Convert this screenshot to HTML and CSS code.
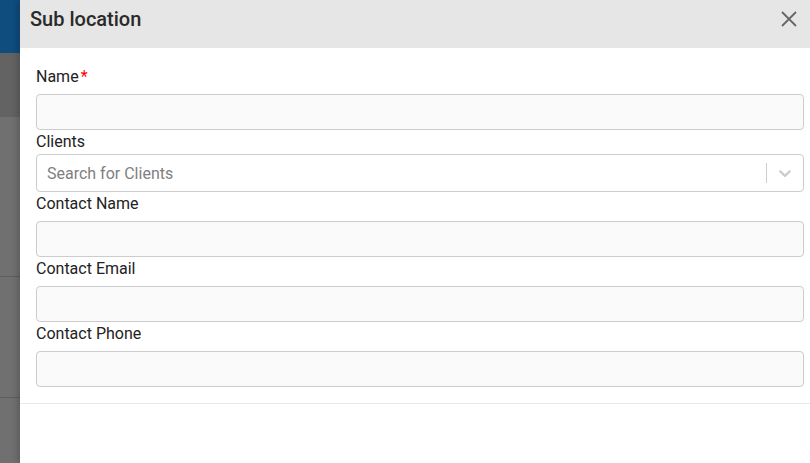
FILE: index.html
```html
<!DOCTYPE html>
<html lang="en">
<head>
    <meta charset="UTF-8">
    <meta name="viewport" content="width=device-width, initial-scale=1.0">
    <title>Sub location</title>
    <link rel="stylesheet" href="styles.css">
</head>
<body>
    <!-- pagina dietro al modale, oscurata -->
    <div class="backdrop">
        <div class="bd-topbar"></div>
        <div class="bd-toolbar"></div>
        <div class="bd-row bd-row-tall"></div>
        <div class="bd-row bd-row-mid"></div>
        <div class="bd-row bd-row-last"></div>
    </div>

    <div class="modal">
        <div class="modal-header">
            <h1 class="modal-title">Sub location</h1>
            <button class="modal-close" aria-label="Close">
                <svg width="16" height="16" viewBox="0 0 16 16">
                    <path d="M1 1 L15 15 M15 1 L1 15" stroke="#666" stroke-width="1.8" fill="none"/>
                </svg>
            </button>
        </div>

        <form class="modal-body">
            <div class="form-group">
                <label class="form-label">Name<span class="required">*</span></label>
                <input type="text" class="form-input">
            </div>

            <div class="form-group form-group-select">
                <label class="form-label">Clients</label>
                <div class="select-control">
                    <div class="select-value">Search for Clients</div>
                    <span class="select-separator"></span>
                    <div class="select-indicator">
                        <svg width="20" height="20" viewBox="0 0 20 20">
                            <path fill="#ccc" d="M4.516 7.548c0.436-0.446 1.043-0.481 1.576 0l3.908 3.747 3.908-3.747c0.533-0.481 1.141-0.446 1.574 0 0.436 0.445 0.408 1.197 0 1.615-0.406 0.418-4.695 4.502-4.695 4.502-0.217 0.223-0.502 0.335-0.787 0.335s-0.57-0.112-0.789-0.335c0 0-4.287-4.084-4.695-4.502s-0.436-1.17 0-1.615z"/>
                        </svg>
                    </div>
                </div>
            </div>

            <div class="form-group">
                <label class="form-label">Contact Name</label>
                <input type="text" class="form-input">
            </div>

            <div class="form-group">
                <label class="form-label">Contact Email</label>
                <input type="email" class="form-input">
            </div>

            <div class="form-group">
                <label class="form-label">Contact Phone</label>
                <input type="tel" class="form-input">
            </div>
        </form>

        <div class="modal-footer"></div>
    </div>
</body>
</html>
```

FILE: styles.css
```css
/* Stili base */
body {
    margin: 0;
    font-family: 'Roboto', 'Liberation Sans', sans-serif;
    color: #222;
    background-color: #fff;
    display: flex;
    height: 100vh;
    overflow: hidden;
}

/* --- Pagina dietro (oscurata) --- */
.backdrop {
    width: 20px;
    flex-shrink: 0;
    display: flex;
    flex-direction: column;
    background-color: #707070;
}

.bd-topbar {
    height: 53px;
    background-color: #0f4d7e;
}

.bd-toolbar {
    height: 64px;
    background-color: #636363;
}

.bd-row {
    border-bottom: 1px solid #5e5e5e;
}

.bd-row-tall {
    height: 159px;
}

.bd-row-mid {
    height: 120px;
}

.bd-row-last {
    flex: 1;
    border-bottom: none;
}

/* --- Modale --- */
.modal {
    flex: 1;
    display: flex;
    flex-direction: column;
    background-color: #fff;
    box-shadow: -3px 0 6px rgba(0, 0, 0, 0.18);
    position: relative;
}

.modal-header {
    height: 48px;
    box-sizing: border-box;
    padding: 4px 10px 0 10px;
    background-color: #e6e6e6;
    display: flex;
    justify-content: space-between;
    align-items: flex-start;
}

.modal-title {
    margin: 0;
    font-size: 20px;
    font-weight: 500;
    line-height: 30px;
    color: #2a2a2a;
}

.modal-close {
    border: none;
    background: none;
    padding: 0;
    margin: 7px 3px 0 0;
    width: 16px;
    height: 16px;
    cursor: pointer;
    display: flex;
}

.modal-body {
    padding: 17px 6px 16px 16px;
}

.form-label {
    display: block;
    font-size: 16px;
    line-height: 24px;
    margin-bottom: 5px;
}

.required {
    color: #f00;
    margin-left: 2px;
}

.form-input {
    display: block;
    width: 100%;
    box-sizing: border-box;
    height: 36px;
    border: 1px solid #ccc;
    border-radius: 4px;
    background-color: #fafafa;
    font-family: inherit;
    font-size: 16px;
    padding: 6px 10px;
    margin: 0;
}

.form-input:focus {
    outline: none;
    border-color: #999;
}

.form-group-select .form-label {
    margin-bottom: 0;
}

.select-control {
    display: flex;
    align-items: center;
    box-sizing: border-box;
    height: 38px;
    border: 1px solid #ccc;
    border-radius: 4px;
    background-color: #fff;
}

.select-value {
    flex: 1;
    padding: 2px 8px 2px 10px;
    font-size: 16px;
    color: #808080;
}

.select-separator {
    width: 1px;
    align-self: stretch;
    margin: 8px 0;
    background-color: #ccc;
}

.select-indicator {
    padding: 8px;
    display: flex;
}

.modal-footer {
    border-top: 1px solid #e9e9e9;
    flex: 1;
}
```
